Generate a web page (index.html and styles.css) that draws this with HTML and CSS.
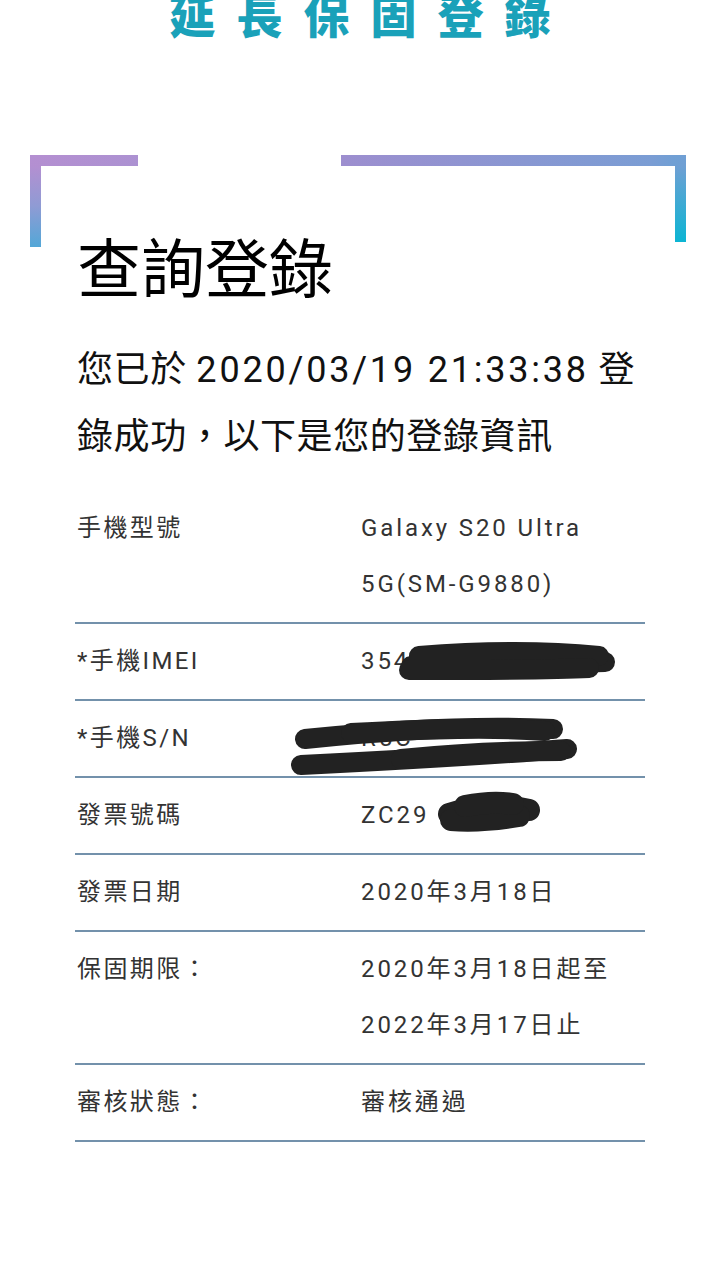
FILE: index.html
```html
<!DOCTYPE html>
<html lang="zh-Hant">

<head>
    <meta charset="utf-8" />
    <meta name="viewport" content="width=device-width,initial-scale=1.0" />
    <title>查詢登錄</title>
    <link rel="stylesheet" href="styles.css">
</head>

<body>
    <div class="page">
        <h1 class="brand">延長保固登錄</h1>

        <div class="frame">
            <span class="corner corner-left"></span>
            <span class="corner corner-right"></span>
        </div>

        <div class="content">
            <h2 class="title">查詢登錄</h2>
            <p class="intro">您已於 <span class="stamp">2020/03/19 21:33:38</span> 登錄成功，以下是您的登錄資訊</p>

            <div class="info">
                <div class="row">
                    <div class="label">手機型號</div>
                    <div class="value">Galaxy S20 Ultra 5G(SM-G9880)</div>
                </div>
                <div class="row">
                    <div class="label">*手機IMEI</div>
                    <div class="value">3542
                        <svg class="scribble scribble-imei" width="220" height="40" viewBox="0 0 220 40">
                            <path d="M12 26 C60 22 120 24 206 22" />
                            <path d="M20 16 C70 12 140 10 200 16" />
                            <path d="M10 30 C80 30 150 30 190 28" />
                        </svg>
                    </div>
                </div>
                <div class="row">
                    <div class="label">*手機S/N</div>
                    <div class="value">R5C
                        <svg class="scribble scribble-sn" width="295" height="64" viewBox="0 0 295 64">
                            <path d="M14 22 C90 14 180 8 262 12" />
                            <path d="M60 16 C140 12 200 10 254 14" />
                            <path d="M10 48 C90 44 170 40 276 32" />
                            <path d="M110 42 C170 36 230 34 270 34" />
                        </svg>
                    </div>
                </div>
                <div class="row">
                    <div class="label">發票號碼</div>
                    <div class="value">ZC29
                        <svg class="scribble scribble-inv" width="110" height="44" viewBox="0 0 110 44">
                            <path d="M14 24 C40 16 70 14 94 20" />
                            <path d="M16 30 C40 32 60 30 84 26" />
                            <path d="M30 16 C50 12 66 12 78 14" />
                        </svg>
                    </div>
                </div>
                <div class="row">
                    <div class="label">發票日期</div>
                    <div class="value">2020年3月18日</div>
                </div>
                <div class="row">
                    <div class="label">保固期限：</div>
                    <div class="value">2020年3月18日起至<br>2022年3月17日止</div>
                </div>
                <div class="row">
                    <div class="label">審核狀態：</div>
                    <div class="value">審核通過</div>
                </div>
            </div>
        </div>
    </div>
</body>

</html>
```

FILE: styles.css
```css
html,
body {
    margin: 0;
    background: #fff;
}

body {
    font-family: Roboto, "Noto Sans CJK TC", sans-serif;
    color: #222;
}

.page {
    width: 720px;
    overflow: hidden;
    padding-bottom: 120px;
}

.brand {
    margin: -6px 0 0;
    font-size: 46px;
    line-height: 46px;
    font-weight: 900;
    letter-spacing: 21px;
    padding-left: 21px;
    text-align: center;
    color: #1aa1b9;
}

.frame {
    display: flex;
    justify-content: space-between;
    align-items: flex-start;
    margin: 115px 34px 0 30px;
}

.corner {
    display: block;
    box-sizing: border-box;
}

.corner-left {
    width: 108px;
    height: 92px;
    border-top: 11px solid;
    border-left: 11px solid;
    border-image: linear-gradient(175deg, #b48fd1 0%, #8f9bd4 45%, #45aad8 100%) 1;
}

.corner-right {
    width: 345px;
    height: 87px;
    border-top: 11px solid;
    border-right: 11px solid;
    border-image: linear-gradient(160deg, #9d8ecf 0%, #7a9dd4 55%, #0ab5d3 100%) 1;
}

.content {
    padding: 0 75px 0 77px;
}

.title {
    margin: -8px 0 0;
    font-size: 64px;
    line-height: 64px;
    font-weight: 400;
    color: #000;
}

.intro {
    margin: 34px 0 0;
    font-size: 36px;
    line-height: 67px;
    letter-spacing: 0.6px;
    color: #111;
}

.stamp {
    letter-spacing: 2.8px;
}

.info {
    margin: 20px 0 0 -2px;
}

.row {
    display: grid;
    grid-template-columns: 286px 1fr;
    padding: 9px 0 10px;
    border-bottom: 2px solid #7391ab;
    font-size: 24px;
    line-height: 56px;
    letter-spacing: 2.4px;
    color: #333;
}

.label {
    padding-left: 2px;
}

.value {
    position: relative;
    letter-spacing: 2.9px;
}

.scribble {
    position: absolute;
    fill: none;
    stroke: #222;
    stroke-linecap: round;
    stroke-width: 20;
}

.scribble-imei {
    left: 38px;
    top: 7px;
}

.scribble-sn {
    left: -70px;
    top: 7px;
}

.scribble-inv {
    left: 74px;
    top: 3px;
}

.scribble-inv path {
    stroke-width: 22;
}
```
